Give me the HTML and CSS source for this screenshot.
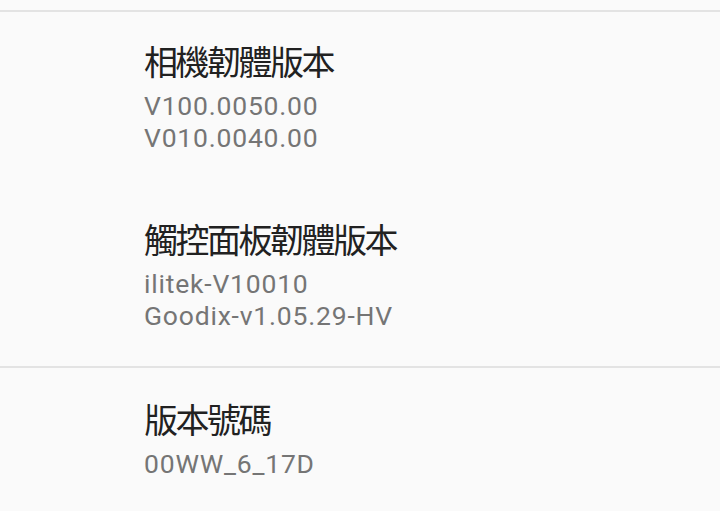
FILE: index.html
```html
<!DOCTYPE html>
<html>
<head>
<meta name="viewport" content="width=device-width, initial-scale=1">
<link rel="stylesheet" href="styles.css">
</head>
<body>

<!-- tail of the previous group -->
<div class="group top"></div>

<div class="group">
  <div class="item">
    <div class="title">相機韌體版本</div>
    <div class="summary">V100.0050.00<br>V010.0040.00</div>
  </div>
  <div class="item">
    <div class="title">觸控面板韌體版本</div>
    <div class="summary">ilitek-V10010<br>Goodix-v1.05.29-HV</div>
  </div>
</div>

<div class="group last">
  <div class="item">
    <div class="title">版本號碼</div>
    <div class="summary">00WW_6_17D</div>
  </div>
</div>

</body>
</html>
```

FILE: styles.css
```css
body {
  margin: 0;
  background-color: #fafafa;
  font-family: Roboto, "Noto Sans CJK TC", sans-serif;
}

.group {
  border-bottom: 2px solid #e3e3e3;
}

.group.top {
  height: 10px;
}

.group.last {
  border-bottom: none;
}

.item {
  padding: 29px 0 36px 144px;
}

/* last row of a group sits a little closer to the divider */
.group .item:last-child {
  padding-bottom: 34px;
}

.group.last .item {
  padding-top: 31px;
}

.title {
  font-family: "Noto Sans CJK TC", sans-serif;
  font-size: 34px;
  letter-spacing: -2.5px;
  line-height: 40px;
  color: #212121;
}

.summary {
  margin-top: 9px;
  font-size: 26.5px;
  letter-spacing: 0.8px;
  line-height: 32px;
  color: #757575;
}
```
